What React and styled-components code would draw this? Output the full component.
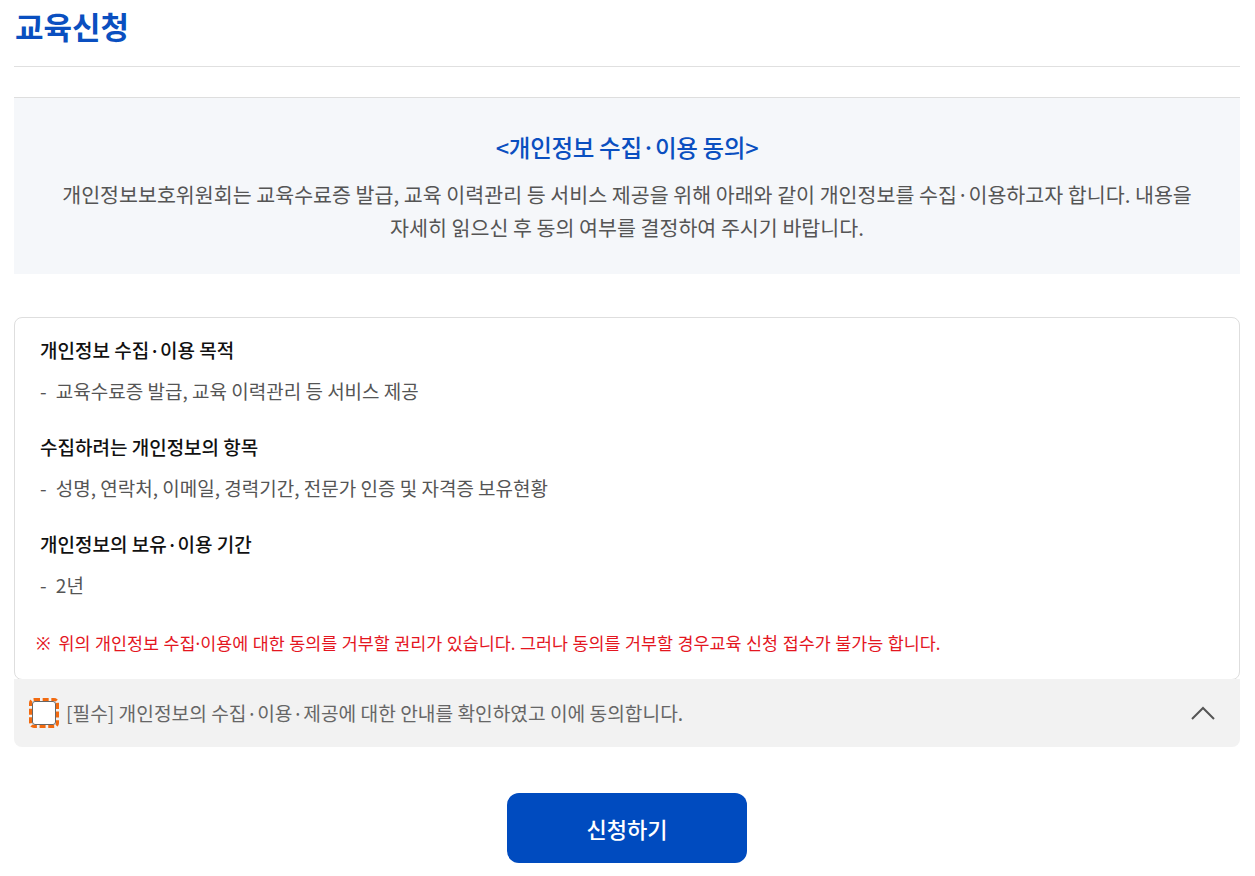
import React from "react";
import styled, { createGlobalStyle } from "styled-components";

const GlobalStyle = createGlobalStyle`
  body {
    margin: 0;
    background: #fff;
    font-family: "Noto Sans CJK KR", "Noto Sans", sans-serif;
    color: #222;
  }
  * { box-sizing: border-box; }
`;

const Page = styled.div`
  padding: 0 15px 0 14px;
`;

const Title = styled.h2`
  margin: 0;
  padding: 3px 0 0 1px;
  height: 67px;
  font-size: 31px;
  font-weight: 700;
  color: #0a4fc0;
  border-bottom: 1px solid #e0e0e0;
`;

const Notice = styled.section`
  margin-top: 30px;
  border-top: 1px solid #dedede;
  background: #f5f7fa;
  padding: 32px 40px 30px;
  text-align: center;
`;

const NoticeTitle = styled.h3`
  margin: 0 0 14px;
  font-size: 23.5px;
  font-weight: 500;
  color: #0a4fc0;
  letter-spacing: -0.3px;
`;

const NoticeText = styled.p`
  margin: 0;
  font-size: 20.6px;
  line-height: 33px;
  color: #555;
`;

const Agree = styled.section`
  margin-top: 43px;
`;

const Card = styled.div`
  border: 1px solid #dedede;
  border-radius: 8px;
  background: #fff;
  padding: 19px 25px 24px 25px;
`;

const Heading = styled.h4`
  margin: ${({ $first }) => ($first ? "0" : "30px")} 0 0;
  font-size: 19px;
  font-weight: 500;
  line-height: 26px;
  color: #111;
`;

const Item = styled.p`
  margin: 15px 0 0;
  font-size: 19px;
  line-height: 26px;
  color: #555;
  span { margin-right: 5px; }
`;

const Warn = styled.p`
  margin: 33px 0 0 -4px;
  font-family: "Noto Sans", "Noto Sans CJK KR", sans-serif;
  font-size: 17.4px;
  line-height: 24px;
  color: #e4161f;
  span { margin-right: 8px; }
`;

const CheckBar = styled.div`
  display: flex;
  align-items: center;
  gap: 7px;
  height: 68px;
  margin-top: -1px;
  padding: 0 24px 0 15px;
  background: #f2f2f2;
  border-radius: 0 0 8px 8px;
`;

const Box = styled.span`
  width: 30px;
  height: 30px;
  border: 3px dashed #f26a10;
  border-radius: 5px;
  display: flex;
  align-items: center;
  justify-content: center;
  &::after {
    content: "";
    width: 22px;
    height: 22px;
    border: 1px solid #666;
    border-radius: 3px;
    background: #fff;
  }
`;

const CheckText = styled.span`
  flex: 1;
  font-size: 19.2px;
  color: #666;
`;

const Chevron = styled.svg`
  width: 26px;
  height: 16px;
`;

const Actions = styled.div`
  display: flex;
  justify-content: center;
  margin-top: 46px;
`;

const Submit = styled.button`
  width: 240px;
  height: 70px;
  border: 0;
  border-radius: 12px;
  background: #004bbf;
  color: #fff;
  font-family: inherit;
  font-size: 22px;
  font-weight: 500;
  cursor: pointer;
`;

const sections = [
  ["개인정보 수집·이용 목적", "교육수료증 발급, 교육 이력관리 등 서비스 제공"],
  ["수집하려는 개인정보의 항목", "성명, 연락처, 이메일, 경력기간, 전문가 인증 및 자격증 보유현황"],
  ["개인정보의 보유·이용 기간", "2년"],
];

export default function App() {
  return (
    <Page>
      <GlobalStyle />
      <Title>교육신청</Title>
      <Notice>
        <NoticeTitle>&lt;개인정보 수집·이용 동의&gt;</NoticeTitle>
        <NoticeText>
          개인정보보호위원회는 교육수료증 발급, 교육 이력관리 등 서비스 제공을 위해 아래와 같이 개인정보를 수집·이용하고자 합니다. 내용을
          <br />
          자세히 읽으신 후 동의 여부를 결정하여 주시기 바랍니다.
        </NoticeText>
      </Notice>
      <Agree>
        <Card>
          {sections.map(([h, t], i) => (
            <React.Fragment key={h}>
              <Heading $first={i === 0}>{h}</Heading>
              <Item>
                <span>-</span> {t}
              </Item>
            </React.Fragment>
          ))}
          <Warn>
            <span>※</span>위의 개인정보 수집·이용에 대한 동의를 거부할 권리가 있습니다. 그러나 동의를 거부할 경우교육 신청 접수가 불가능 합니다.
          </Warn>
        </Card>
        <CheckBar>
          <Box />
          <CheckText>[필수] 개인정보의 수집·이용·제공에 대한 안내를 확인하였고 이에 동의합니다.</CheckText>
          <Chevron viewBox="0 0 26 16" fill="none">
            <path d="M2 14 L13 3 L24 14" stroke="#555" strokeWidth="2" />
          </Chevron>
        </CheckBar>
      </Agree>
      <Actions>
        <Submit>신청하기</Submit>
      </Actions>
    </Page>
  );
}
